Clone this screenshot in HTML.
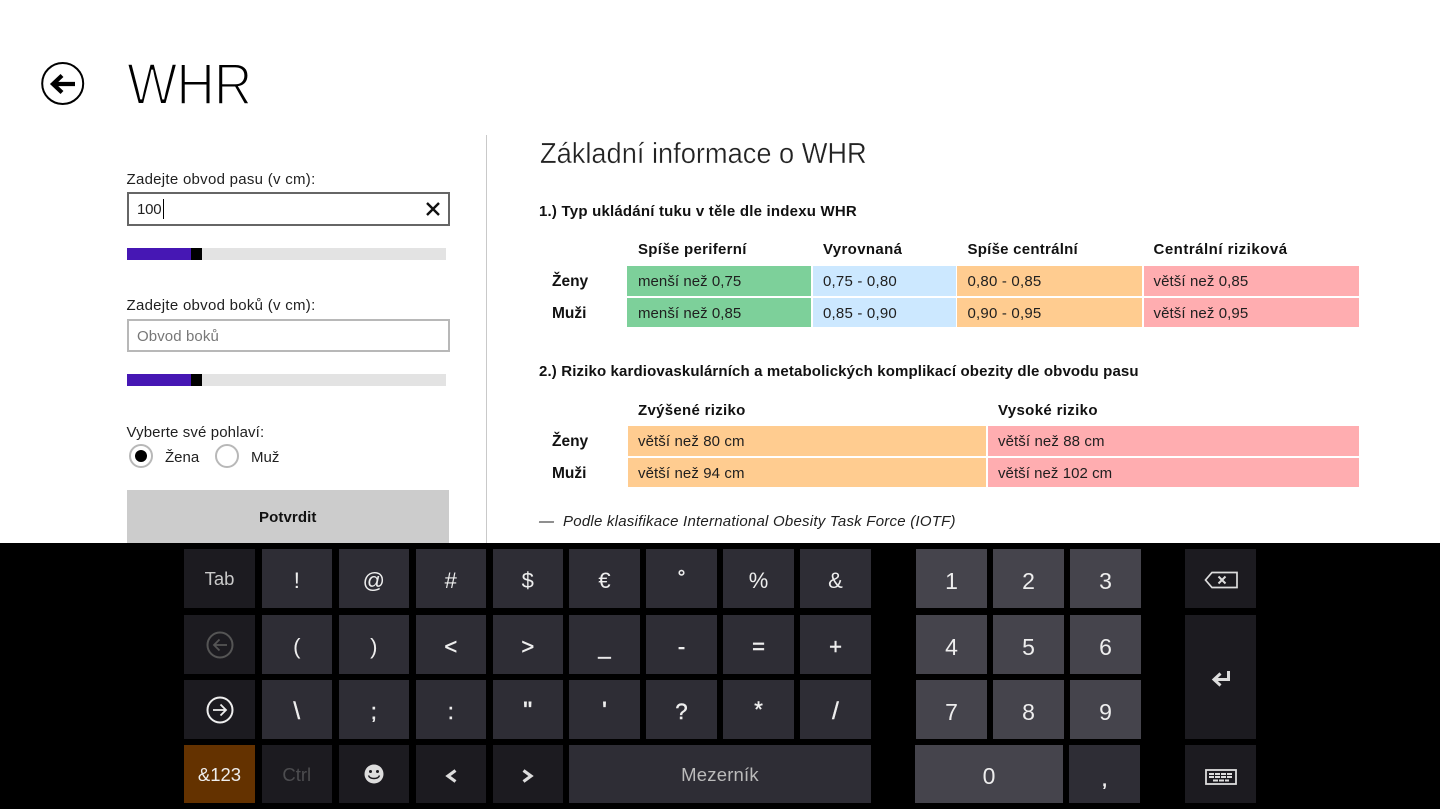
<!DOCTYPE html>
<html lang="cs"><head><meta charset="utf-8"><title>WHR</title>
<style>
html,body{margin:0;padding:0;width:1440px;height:810px;overflow:hidden;background:#fff}
body{position:relative;font-family:"Liberation Sans",sans-serif;color:#1f1f1f}
.t{position:absolute;white-space:nowrap;font-size:15px;line-height:20px;margin-top:2px}
.b{font-weight:bold;color:#111;font-size:15px}
.c{position:absolute;height:30px}
.g{background:#7dd09a}.l{background:#cce8ff}.o{background:#ffcc90}.r{background:#ffadb0}
.bar{position:absolute;left:126.5px;width:319.5px;height:11.5px;background:#e3e3e3}
.bar i{position:absolute;left:0;top:0;width:64.5px;height:11.5px;background:#4617b4}
.bar b{position:absolute;left:64.5px;top:0;width:11px;height:11.5px;background:#000}
#kb{position:absolute;left:0;top:543px;width:1440px;height:266px;background:#000}
.k{position:absolute;background:#2e2d35;color:#eee;font-size:22px;display:flex;align-items:center;justify-content:center;box-sizing:border-box;padding-top:4px}
.h{-webkit-text-stroke:.45px #eee}
.d{background:#1c1b20}.n{background:#45444c}
.ks{font-size:18.5px;color:#c9c9c9}
.nm{font-size:23px;padding-top:5px}
</style></head><body>

<svg style="position:absolute;left:40px;top:61px" width="46" height="46" viewBox="0 0 46 46"><circle cx="22.7" cy="22.5" r="20.5" fill="none" stroke="#000" stroke-width="2"/><path d="M35 23H14M22 14.500L13 23l9 8.500" fill="none" stroke="#000" stroke-width="4.200"/></svg>
<div class="t" style="left:126.5px;top:48px;font-size:58.5px;line-height:70px;letter-spacing:-1px;color:#000;-webkit-text-stroke:2.1px #fff;transform:scaleX(.91);transform-origin:left top">WHR</div>
<div style="position:absolute;left:486px;top:135px;width:1px;height:408px;background:#c9c9c9"></div>

<div class="t" style="left:126.5px;top:168px;letter-spacing:.28px">Zadejte obvod pasu (v cm):</div>
<div style="position:absolute;left:126.5px;top:192px;width:323.5px;height:33.5px;box-sizing:border-box;border:2px solid #666;background:#fff"></div>
<div class="t" style="left:137px;top:197.5px;letter-spacing:-.2px">100</div>
<div style="position:absolute;left:162.5px;top:199px;width:1px;height:20px;background:#000"></div>
<svg style="position:absolute;left:425px;top:201px" width="16" height="16"><path d="M2 2L14 14M14 2L2 14" stroke="#111" stroke-width="2.4"/></svg>
<div class="bar" style="top:248px"><i></i><b></b></div>

<div class="t" style="left:126.5px;top:294px;letter-spacing:.28px">Zadejte obvod boků (v cm):</div>
<div style="position:absolute;left:126.5px;top:319px;width:323.5px;height:33px;box-sizing:border-box;border:2px solid #b8b8b8;background:#fff"></div>
<div class="t" style="left:137px;top:325px;color:#777;letter-spacing:.1px">Obvod boků</div>
<div class="bar" style="top:374px"><i></i><b></b></div>

<div class="t" style="left:126.5px;top:420.5px;letter-spacing:.12px">Vyberte své pohlaví:</div>
<svg style="position:absolute;left:128px;top:443px" width="26" height="26"><circle cx="13" cy="13" r="11" fill="#fff" stroke="#b8b8b8" stroke-width="2"/><circle cx="13" cy="13" r="6" fill="#000"/></svg>
<div class="t" style="left:165px;top:445.5px">Žena</div>
<svg style="position:absolute;left:214px;top:443px" width="26" height="26"><circle cx="13" cy="13" r="11" fill="#fff" stroke="#b8b8b8" stroke-width="2"/></svg>
<div class="t" style="left:251px;top:445.5px">Muž</div>
<div style="position:absolute;left:126.5px;top:490px;width:322.5px;height:53px;background:#ccc"></div>
<div class="t b" style="left:126.5px;width:322.5px;text-align:center;top:506px;letter-spacing:.1px">Potvrdit</div>

<div class="t" style="left:539.5px;top:134.4px;font-size:28.5px;line-height:36px;color:#222;-webkit-text-stroke:.35px #fff;transform:scaleX(.955);transform-origin:left top">Základní informace o WHR</div>
<div class="t b" style="left:539px;top:200px;letter-spacing:.21px">1.) Typ ukládání tuku v těle dle indexu WHR</div>
<div class="t b" style="left:638px;top:238px;letter-spacing:.3px">Spíše periferní</div>
<div class="t b" style="left:823px;top:238px;letter-spacing:.35px">Vyrovnaná</div>
<div class="t b" style="left:967.5px;top:238px;letter-spacing:.25px">Spíše centrální</div>
<div class="t b" style="left:1153.5px;top:238px;letter-spacing:.5px">Centrální riziková</div>

<div class="t b" style="left:552px;top:270px;font-size:15.5px">Ženy</div>
<div class="c g" style="left:627px;top:266px;width:184px"></div><div class="t" style="left:638px;top:270px;letter-spacing:.05px">menší než 0,75</div>
<div class="c l" style="left:813px;top:266px;width:143px"></div><div class="t" style="left:823px;top:270px;letter-spacing:.2px">0,75 - 0,80</div>
<div class="c o" style="left:957px;top:266px;width:185px"></div><div class="t" style="left:967.5px;top:270px;letter-spacing:.2px">0,80 - 0,85</div>
<div class="c r" style="left:1144px;top:266px;width:215px"></div><div class="t" style="left:1153.5px;top:270px;letter-spacing:.1px">větší než 0,85</div>

<div class="t b" style="left:552px;top:302px;font-size:15.5px">Muži</div>
<div class="c g" style="left:627px;top:298px;width:184px;height:29px"></div><div class="t" style="left:638px;top:302px;letter-spacing:.05px">menší než 0,85</div>
<div class="c l" style="left:813px;top:298px;width:143px;height:29px"></div><div class="t" style="left:823px;top:302px;letter-spacing:.2px">0,85 - 0,90</div>
<div class="c o" style="left:957px;top:298px;width:185px;height:29px"></div><div class="t" style="left:967.5px;top:302px;letter-spacing:.2px">0,90 - 0,95</div>
<div class="c r" style="left:1144px;top:298px;width:215px;height:29px"></div><div class="t" style="left:1153.5px;top:302px;letter-spacing:.1px">větší než 0,95</div>

<div class="t b" style="left:539px;top:360px;letter-spacing:.14px">2.) Riziko kardiovaskulárních a metabolických komplikací obezity dle obvodu pasu</div>
<div class="t b" style="left:638px;top:399px;letter-spacing:.3px">Zvýšené riziko</div>
<div class="t b" style="left:998px;top:399px;letter-spacing:.35px">Vysoké riziko</div>

<div class="t b" style="left:552px;top:430px;font-size:15.5px">Ženy</div>
<div class="c o" style="left:628px;top:426px;width:358px"></div><div class="t" style="left:638px;top:430px;letter-spacing:.1px">větší než 80 cm</div>
<div class="c r" style="left:988px;top:426px;width:371px"></div><div class="t" style="left:998px;top:430px;letter-spacing:.1px">větší než 88 cm</div>
<div class="t b" style="left:552px;top:462px;font-size:15.5px">Muži</div>
<div class="c o" style="left:628px;top:458px;width:358px;height:29px"></div><div class="t" style="left:638px;top:462px;letter-spacing:.1px">větší než 94 cm</div>
<div class="c r" style="left:988px;top:458px;width:371px;height:29px"></div><div class="t" style="left:998px;top:462px;letter-spacing:.05px">větší než 102 cm</div>
<div class="t" style="left:539px;top:510px;font-style:italic;letter-spacing:.23px">—&nbsp; Podle klasifikace International Obesity Task Force (IOTF)</div>

<div id="kb"></div>
<div class="k d ks" style="left:184px;top:549px;width:71px;height:59px;padding-top:0">Tab</div>
<div class="k" style="left:261.5px;top:549px;width:70.5px;height:59px">!</div>
<div class="k" style="left:338.5px;top:549px;width:70.5px;height:59px">@</div>
<div class="k" style="left:415.5px;top:549px;width:70.5px;height:59px">#</div>
<div class="k" style="left:492.5px;top:549px;width:70.5px;height:59px">$</div>
<div class="k" style="left:569px;top:549px;width:71px;height:59px">€</div>
<div class="k h" style="left:646px;top:549px;width:71px;height:59px;padding-top:0;font-size:20px">°</div>
<div class="k" style="left:723px;top:549px;width:71px;height:59px">%</div>
<div class="k" style="left:800px;top:549px;width:71px;height:59px">&amp;</div>

<div class="k d" style="left:184px;top:615px;width:71px;height:59px;padding-top:0"><svg width="28" height="28"><circle cx="14" cy="14" r="12.5" fill="none" stroke="#555" stroke-width="2"/><path d="M21 14H8M13.5 8.500L8 14l5.500 5.500" fill="none" stroke="#555" stroke-width="1.800"/></svg></div>
<div class="k" style="left:261.5px;top:615px;width:70.5px;height:59px">(</div>
<div class="k" style="left:338.5px;top:615px;width:70.5px;height:59px">)</div>
<div class="k h" style="left:415.5px;top:615px;width:70.5px;height:59px">&lt;</div>
<div class="k h" style="left:492.5px;top:615px;width:70.5px;height:59px">&gt;</div>
<div class="k h" style="left:569px;top:615px;width:71px;height:59px">_</div>
<div class="k h" style="left:646px;top:615px;width:71px;height:59px">-</div>
<div class="k h" style="left:723px;top:615px;width:71px;height:59px">=</div>
<div class="k h" style="left:800px;top:615px;width:71px;height:59px">+</div>

<div class="k d" style="left:184px;top:680px;width:71px;height:59px;padding-top:0"><svg width="28" height="28"><circle cx="14" cy="14" r="12.5" fill="none" stroke="#eee" stroke-width="2"/><path d="M7 14H20M14.500 8.500L20 14l-5.500 5.500" fill="none" stroke="#eee" stroke-width="1.800"/></svg></div>
<div class="k h" style="left:261.5px;top:680px;width:70.5px;height:59px;font-size:24px">\</div>
<div class="k h" style="left:338.5px;top:680px;width:70.5px;height:59px">;</div>
<div class="k h" style="left:415.5px;top:680px;width:70.5px;height:59px">:</div>
<div class="k" style="left:492.5px;top:680px;width:70.5px;height:59px;font-weight:bold;padding-top:0">"</div>
<div class="k" style="left:569px;top:680px;width:71px;height:59px;font-weight:bold;padding-top:0">'</div>
<div class="k h" style="left:646px;top:680px;width:71px;height:59px">?</div>
<div class="k h" style="left:723px;top:680px;width:71px;height:59px;padding-top:0">*</div>
<div class="k h" style="left:800px;top:680px;width:71px;height:59px;font-size:24px">/</div>

<div class="k" style="left:184px;top:745px;width:71px;height:58px;background:#643200;font-size:18.5px;color:#eee;padding-top:1px">&amp;123</div>
<div class="k d ks" style="left:261.5px;top:745px;width:70.5px;height:58px;color:#4c4c4f;padding-top:1px">Ctrl</div>
<div class="k d" style="left:338.5px;top:745px;width:70.5px;height:58px;padding-top:0"><svg width="20" height="20"><circle cx="10" cy="10" r="9.500" fill="#ddd"/><circle cx="6.500" cy="7.500" r="1.500" fill="#1c1b20"/><circle cx="13.500" cy="7.500" r="1.500" fill="#1c1b20"/><path d="M4.500 11.500c1.500 4 9.500 4 11 0" fill="none" stroke="#1c1b20" stroke-width="1.400"/></svg></div>
<div class="k d" style="left:415.5px;top:745px;width:70.5px;height:58px"><svg width="14" height="16"><path d="M11.500 2.500L4 8l7.500 5.500" fill="none" stroke="#ddd" stroke-width="3.200"/></svg></div>
<div class="k d" style="left:492.5px;top:745px;width:70.5px;height:58px"><svg width="14" height="16"><path d="M2.500 2.500L10 8l-7.500 5.500" fill="none" stroke="#ddd" stroke-width="3.200"/></svg></div>
<div class="k ks" style="left:569px;top:745px;width:302px;height:58px;color:#bbb;padding-top:1px;letter-spacing:.2px">Mezerník</div>

<div class="k n nm" style="left:916px;top:549px;width:71px;height:59px">1</div>
<div class="k n nm" style="left:993px;top:549px;width:71px;height:59px">2</div>
<div class="k n nm" style="left:1070px;top:549px;width:71px;height:59px">3</div>
<div class="k n nm" style="left:916px;top:615px;width:71px;height:59px">4</div>
<div class="k n nm" style="left:993px;top:615px;width:71px;height:59px">5</div>
<div class="k n nm" style="left:1070px;top:615px;width:71px;height:59px">6</div>
<div class="k n nm" style="left:916px;top:680px;width:71px;height:59px">7</div>
<div class="k n nm" style="left:993px;top:680px;width:71px;height:59px">8</div>
<div class="k n nm" style="left:1070px;top:680px;width:71px;height:59px">9</div>
<div class="k n nm" style="left:915px;top:745px;width:148px;height:58px">0</div>
<div class="k h" style="left:1069px;top:745px;width:71px;height:58px;padding-top:10px">,</div>

<div class="k d" style="left:1185px;top:549px;width:71px;height:59px;padding-top:3px"><svg width="36" height="20"><path d="M9 2.500H34V17.500H9L2.500 10Z" fill="none" stroke="#ddd" stroke-width="1.700"/><path d="M15.500 6.500L22.500 13.500M22.500 6.500L15.500 13.500" stroke="#ddd" stroke-width="2"/></svg></div>
<div class="k d" style="left:1185px;top:615px;width:71px;height:124px"><svg width="22" height="20"><path d="M18.500 2V10.500H5M10.500 4.500L4 10.500 10.500 16.500" fill="none" stroke="#ddd" stroke-width="3"/></svg></div>
<div class="k d" style="left:1185px;top:745px;width:71px;height:58px;padding-top:6px"><svg width="32" height="16"><rect x="1" y="1" width="30" height="14" fill="#1c1b20" stroke="#ddd" stroke-width="1.800"/><path d="M4 5H28M4 8H28M8 11.500H24" stroke="#ddd" stroke-width="2" stroke-dasharray="5 1"/></svg></div>

</body></html>
